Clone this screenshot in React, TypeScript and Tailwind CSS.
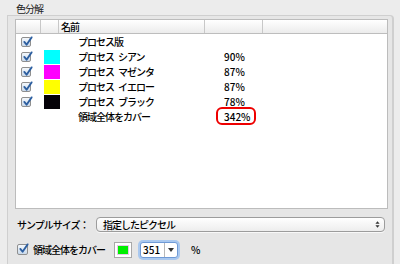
import React from "react";

const rows = [
  { name: "プロセス版", color: null, pct: "" },
  { name: "プロセス\u2002シアン", color: "bg-[#00ffff]", pct: "90%" },
  { name: "プロセス\u2002マゼンタ", color: "bg-[#ff00ff]", pct: "87%" },
  { name: "プロセス\u2002イエロー", color: "bg-[#ffff00]", pct: "87%" },
  { name: "プロセス\u2002ブラック", color: "bg-[#050208]", pct: "78%" },
];

function Check({ className = "" }: { className?: string }) {
  return (
    <span className={`relative inline-block h-[10px] w-[10px] shrink-0 rounded-[2px] border border-[#8f8f8f] bg-gradient-to-b from-[#f4f8fc] to-[#cbdaea] ${className}`}>
      <svg viewBox="0 0 12 12" className="absolute left-0 -top-[2px] h-[11px] w-[11px]">
        <path d="M2.5 6.5 L5 9.5 L10.5 1.5" fill="none" stroke="#2d5fa0" strokeWidth="2" strokeLinecap="round" strokeLinejoin="round" />
      </svg>
    </span>
  );
}

export default function App() {
  return (
    <div
      className="grid h-[264px] w-[400px] grid-rows-[15px_249px] bg-[#ececec] pl-[7px] text-[10px] tracking-[-1px] text-black"
      style={{ fontFamily: '"Noto Sans CJK JP", "Liberation Sans", sans-serif' }}
    >
      <section className="row-start-2 w-[387px] rounded-tr-[4px] border-l border-r-2 border-t border-[#cfcfcf] bg-[#e6e6e6] pl-[7px] pt-[3px]">
        {/* list */}
        <div className="h-[190px] w-[373px] border border-[#bcbcbc] bg-white">
          <div className="flex h-[14px] border-b border-[#bdbdbd] bg-gradient-to-b from-white to-[#ececec] leading-[13px]">
            <div className="w-[25px] border-r border-[#c8c8c8]" />
            <div className="w-[18px] border-r border-[#c8c8c8]" />
            <div className="w-[146px] whitespace-nowrap border-r border-[#c8c8c8] pl-[2px] font-medium">名前</div>
            <div className="w-[58px] border-r border-[#c8c8c8]" />
            <div className="flex-1" />
          </div>

          {rows.map((r) => (
            <div key={r.name} className="flex h-[15px] items-center leading-[15px]">
              <div className="flex w-[26px] items-center pl-[5px]">
                <Check />
              </div>
              <div className="flex w-[18px] items-center pl-[2px]">
                {r.color && <span className={`block h-[14px] w-[16px] ${r.color}`} />}
              </div>
              <div className="w-[146px] whitespace-pre pl-[18px] font-medium">{r.name}</div>
              <div className="w-[58px] whitespace-nowrap pl-[18px] font-medium tracking-normal">{r.pct}</div>
            </div>
          ))}
          <div className="flex h-[15px] items-center leading-[15px]">
            <div className="w-[44px]" />
            <div className="w-[146px] whitespace-nowrap pl-[18px] font-medium">領域全体をカバー</div>
            <div className="relative w-[58px] whitespace-nowrap pl-[18px] font-medium tracking-normal">
              342%
              <span className="absolute left-[10px] top-[-2px] h-[18px] w-[40px] rounded-[6px] border-2 border-[#ee0000]" />
            </div>
          </div>
        </div>

        {/* sample size */}
        <div className="mt-[8px] flex h-[15px] items-center">
          <span className="ml-[2px] w-[79px] whitespace-nowrap font-medium leading-[15px]">サンプルサイズ：</span>
          <div className="flex h-[15px] w-[289px] items-center justify-between rounded-[4px] border border-[#9c9c9c] bg-gradient-to-b from-white to-[#ededed] pl-[6px] pr-[4px] shadow-[0_1px_0_#f8f8f8]">
            <span className="whitespace-nowrap font-medium leading-[13px]">指定したピクセル</span>
            <svg viewBox="0 0 6 10" className="h-[9px] w-[5px]">
              <path d="M0.5 4 L3 1 L5.5 4 Z M0.5 6 L3 9 L5.5 6 Z" fill="#333" />
            </svg>
          </div>
        </div>

        {/* cover row */}
        <div className="mt-[9px] flex h-[17px] items-center">
          <Check className="ml-[2px] h-[11px] w-[11px]" />
          <span className="ml-[5px] w-[81px] whitespace-nowrap font-medium">領域全体をカバー</span>
          <span className="flex h-[16px] w-[18px] shrink-0 items-center justify-center border border-[#a8a8a8] bg-white">
            <span className="block h-[10px] w-[12px] border border-[#e8c8e8] bg-[#00ee00]" />
          </span>
          <div className="ml-[8px] flex h-[16px] w-[38px] shrink-0 items-center rounded-[3px] border border-[#6f9ad6] bg-white shadow-[0_0_0_2px_#a9c8ef]">
            <span className="w-[23px] whitespace-nowrap pl-[2px] font-medium leading-[14px] tracking-normal">351</span>
            <span className="flex h-full flex-1 items-center justify-center border-l border-[#b8b8b8]">
              <svg viewBox="0 0 6 4" className="h-[4px] w-[6px]">
                <path d="M0 0 L6 0 L3 4 Z" fill="#333" />
              </svg>
            </span>
          </div>
          <span className="ml-[13px] font-medium tracking-normal">%</span>
        </div>
      </section>

      <div className="row-start-1 flex items-center pl-[9px] pt-[1px] text-[#222]">
        <span>色分解</span>
      </div>
    </div>
  );
}
